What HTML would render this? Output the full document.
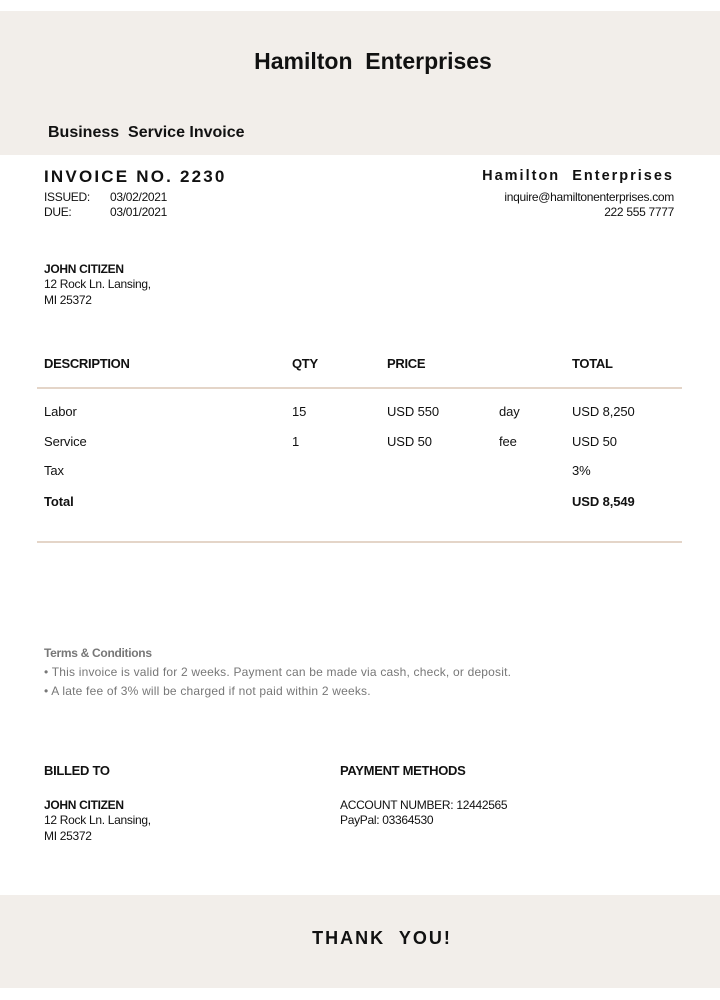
<!DOCTYPE html>
<html><head><meta charset="utf-8"><style>
body{margin:0;width:720px;height:1000px;background:#fff;position:relative;font-family:"Liberation Sans",Arial,sans-serif;color:#111;overflow:hidden}
.a{position:absolute;white-space:nowrap}
.band{position:absolute;left:0;width:720px;background:#f2eeea}
.line{position:absolute;left:37px;width:645px;height:2px;background:#e4d5c8}
.s{font-size:12px;letter-spacing:-0.3px}
.b{font-weight:bold}
.r{font-size:13px;letter-spacing:-0.1px}
.g{color:#777}
</style></head><body>
<div class="band" style="top:11px;height:144px"></div>
<div class="a b" style="left:0;width:746px;text-align:center;top:48px;font-size:23px">Hamilton&nbsp; Enterprises</div>
<div class="a b" style="left:48px;top:124px;font-size:16px">Business&nbsp; Service Invoice</div>

<div class="a b" style="left:44px;top:167px;font-size:17px;letter-spacing:2.2px">INVOICE NO. 2230</div>
<div class="a s" style="left:44px;top:190px">ISSUED:</div><div class="a s" style="left:110px;top:190px">03/02/2021</div>
<div class="a s" style="left:44px;top:205px">DUE:</div><div class="a s" style="left:110px;top:205px">03/01/2021</div>
<div class="a b" style="right:46px;top:168px;font-size:14.5px;letter-spacing:2px">Hamilton&nbsp; Enterprises</div>
<div class="a s" style="right:46px;top:190px">inquire@hamiltonenterprises.com</div>
<div class="a s" style="right:46px;top:205px">222 555 7777</div>

<div class="a s b" style="left:44px;top:262px">JOHN CITIZEN</div>
<div class="a s" style="left:44px;top:277px">12 Rock Ln. Lansing,</div>
<div class="a s" style="left:44px;top:293px">MI 25372</div>

<div class="a s b" style="left:44px;top:356px;font-size:13px">DESCRIPTION</div>
<div class="a s b" style="left:292px;top:356px;font-size:13px">QTY</div>
<div class="a s b" style="left:387px;top:356px;font-size:13px">PRICE</div>
<div class="a s b" style="left:572px;top:356px;font-size:13px">TOTAL</div>
<div class="line" style="top:387px"></div>

<div class="a r" style="left:44px;top:404px">Labor</div><div class="a r" style="left:292px;top:404px">15</div><div class="a r" style="left:387px;top:404px">USD 550</div><div class="a r" style="left:499px;top:404px">day</div><div class="a r" style="left:572px;top:404px">USD 8,250</div>
<div class="a r" style="left:44px;top:434px">Service</div><div class="a r" style="left:292px;top:434px">1</div><div class="a r" style="left:387px;top:434px">USD 50</div><div class="a r" style="left:499px;top:434px">fee</div><div class="a r" style="left:572px;top:434px">USD 50</div>
<div class="a r" style="left:44px;top:463px">Tax</div><div class="a r" style="left:572px;top:463px">3%</div>
<div class="a r b" style="left:44px;top:494px">Total</div><div class="a r b" style="left:572px;top:494px">USD 8,549</div>
<div class="line" style="top:541px"></div>

<div class="a s g b" style="left:44px;top:646px">Terms &amp; Conditions</div>
<div class="a g" style="left:44px;top:665px;font-size:12px;letter-spacing:0.2px">• This invoice is valid for 2 weeks. Payment can be made via cash, check, or deposit.</div>
<div class="a g" style="left:44px;top:684px;font-size:12px;letter-spacing:0.2px">• A late fee of 3% will be charged if not paid within 2 weeks.</div>

<div class="a s b" style="left:44px;top:763px;font-size:13px">BILLED TO</div>
<div class="a s b" style="left:340px;top:763px;font-size:13px">PAYMENT METHODS</div>
<div class="a s b" style="left:44px;top:798px">JOHN CITIZEN</div>
<div class="a s" style="left:44px;top:813px">12 Rock Ln. Lansing,</div>
<div class="a s" style="left:44px;top:829px">MI 25372</div>
<div class="a s" style="left:340px;top:798px">ACCOUNT NUMBER: 12442565</div>
<div class="a s" style="left:340px;top:813px">PayPal: 03364530</div>

<div class="band" style="top:895px;height:93px"></div>
<div class="a b" style="left:0;width:764px;text-align:center;top:928px;font-size:18px;letter-spacing:2px">THANK&nbsp; YOU!</div>
</body></html>
